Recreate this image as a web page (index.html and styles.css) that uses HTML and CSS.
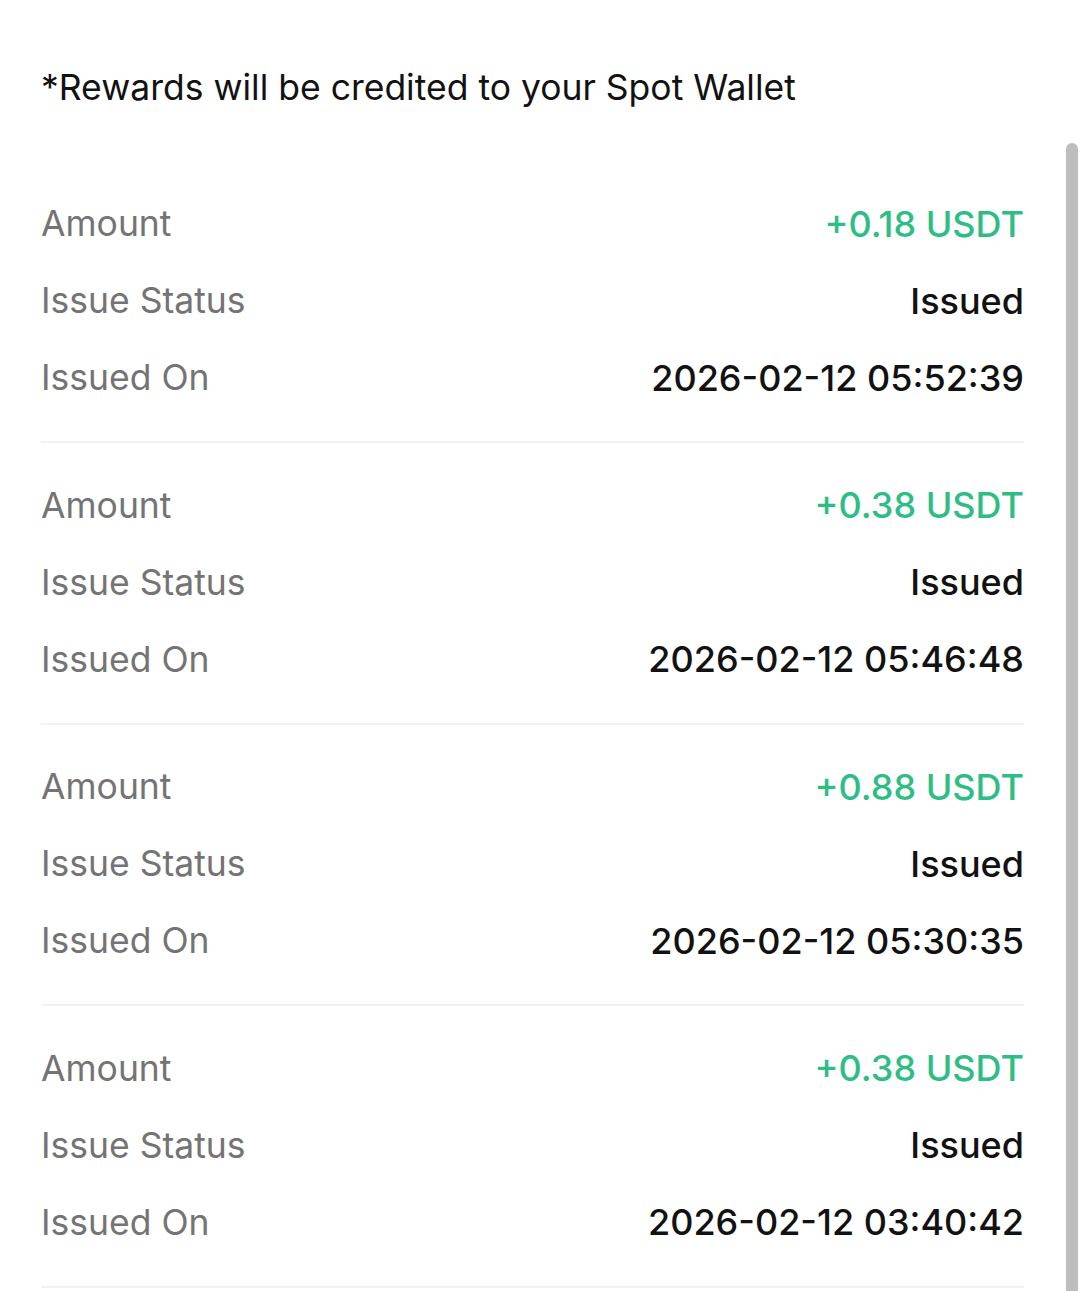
FILE: index.html
```html
<!DOCTYPE html>
<html lang="en">

<head>
    <meta charset="UTF-8">
    <meta name="viewport" content="width=device-width, initial-scale=1.0">
    <title>Reward History</title>
    <link rel="stylesheet" href="styles.css">
</head>

<body>
    <div class="page">
        <p class="note">*Rewards will be credited to your Spot Wallet</p>

        <div class="records">
            <div class="record">
                <div class="row"><span class="label">Amount</span><span class="value green">+0.18 USDT</span></div>
                <div class="row"><span class="label">Issue Status</span><span class="value">Issued</span></div>
                <div class="row"><span class="label">Issued On</span><span class="value">2026-02-12 05:52:39</span></div>
            </div>
            <div class="record">
                <div class="row"><span class="label">Amount</span><span class="value green">+0.38 USDT</span></div>
                <div class="row"><span class="label">Issue Status</span><span class="value">Issued</span></div>
                <div class="row"><span class="label">Issued On</span><span class="value">2026-02-12 05:46:48</span></div>
            </div>
            <div class="record">
                <div class="row"><span class="label">Amount</span><span class="value green">+0.88 USDT</span></div>
                <div class="row"><span class="label">Issue Status</span><span class="value">Issued</span></div>
                <div class="row"><span class="label">Issued On</span><span class="value">2026-02-12 05:30:35</span></div>
            </div>
            <div class="record">
                <div class="row"><span class="label">Amount</span><span class="value green">+0.38 USDT</span></div>
                <div class="row"><span class="label">Issue Status</span><span class="value">Issued</span></div>
                <div class="row"><span class="label">Issued On</span><span class="value">2026-02-12 03:40:42</span></div>
            </div>
        </div>

        <!-- scrollbar thumb -->
        <div class="scroll-thumb"></div>
    </div>
</body>

</html>
```
FILE: styles.css
```css
body {
    font-family: Inter, "Open Sans", sans-serif;
    margin: 0;
    padding: 0;
    background-color: #fff;
    overflow: hidden;
}

.page {
    position: relative;
    height: 1291px;
    padding: 64px 56px 0 41px;
    box-sizing: border-box;
}

.note {
    margin: 0 0 49.5px;
    font-size: 35.5px;
    line-height: 48px;
    color: #121212;
    white-space: nowrap;
}

.record {
    padding: 23.5px 0 25px;
    border-bottom: 2px solid #f2f2f2;
}

.row {
    display: flex;
    justify-content: space-between;
    align-items: center;
    height: 77px;
}

.label {
    font-size: 35.5px;
    color: #747474;
}

.value {
    font-size: 36px;
    font-weight: 500;
    color: #121212;
}

.value.green {
    color: #2ebd85;
}

.scroll-thumb {
    position: absolute;
    top: 143px;
    right: 2px;
    bottom: 0;
    width: 12px;
    background-color: #bdbdbd;
    border-radius: 6px 6px 0 0;
}
```
